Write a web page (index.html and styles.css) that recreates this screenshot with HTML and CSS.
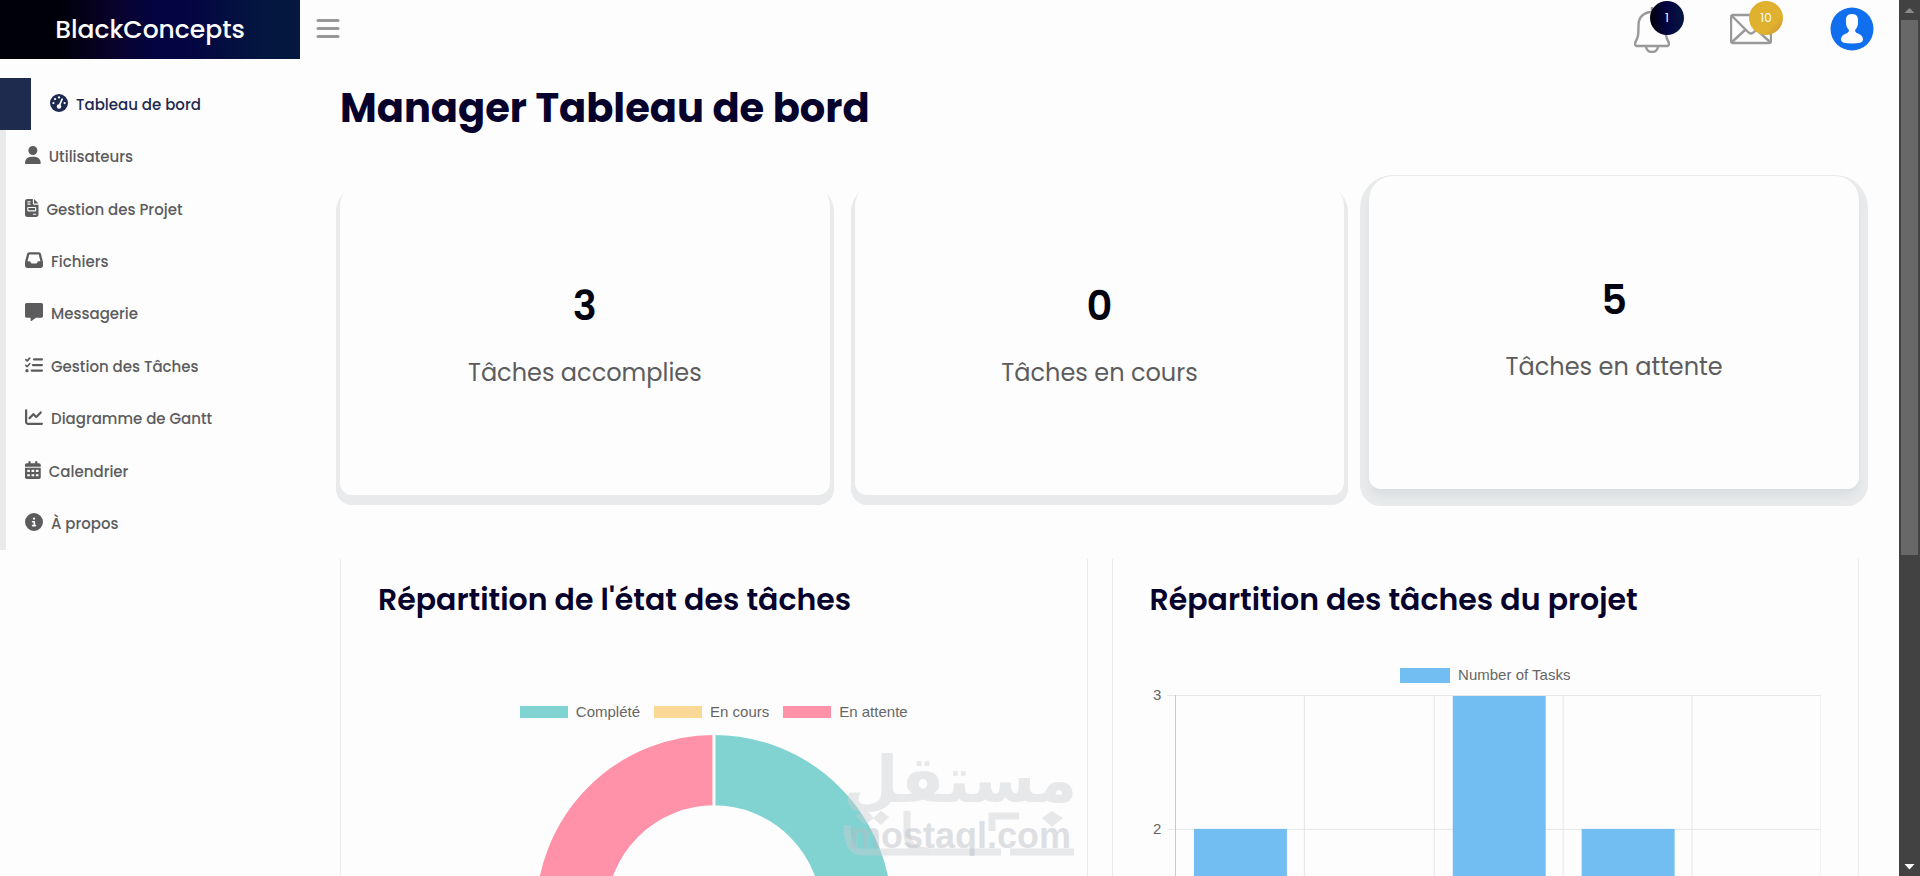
FILE: index.html
```html
<!DOCTYPE html>
<html lang="fr">
<head>
<meta charset="utf-8">
<title>BlackConcepts</title>
<link rel="stylesheet" href="styles.css">
</head>
<body>
<div class="app">
  <aside class="sidebar">
    <a class="brand" href="#">BlackConcepts</a>
    <nav class="nav">
      <a class="nav-item active" href="#"><svg class="icon" viewBox="0 0 512 512"><circle cx="256" cy="256" r="256"/><g fill="#fdfdfd"><circle cx="256" cy="96" r="32"/><circle cx="144" cy="144" r="32"/><circle cx="96" cy="256" r="32"/><circle cx="416" cy="256" r="32"/><circle cx="256" cy="352" r="64"/></g><path d="M256 352L345 148" fill="none" stroke="#fdfdfd" stroke-width="48" stroke-linecap="round"/></svg><span>Tableau de bord</span></a>
      <a class="nav-item" href="#"><svg class="icon" viewBox="0 0 448 512"><path d="M224 256A128 128 0 1 0 224 0a128 128 0 1 0 0 256zm-45.7 48C79.8 304 0 383.8 0 482.3C0 498.7 13.3 512 29.7 512H418.3c16.4 0 29.7-13.3 29.7-29.7C448 383.8 368.2 304 269.7 304H178.3z"/></svg><span>Utilisateurs</span></a>
      <a class="nav-item" href="#"><svg class="icon" viewBox="0 0 384 512"><path fill-rule="evenodd" d="M64 0C28.7 0 0 28.7 0 64V448c0 35.3 28.7 64 64 64H320c35.3 0 64-28.7 64-64V160H256c-17.7 0-32-14.3-32-32V0H64zM256 0V128H384L256 0zM80 64h64c8.8 0 16 7.2 16 16s-7.2 16-16 16H80c-8.8 0-16-7.2-16-16s7.2-16 16-16zm0 64h64c8.8 0 16 7.2 16 16s-7.2 16-16 16H80c-8.8 0-16-7.2-16-16s7.2-16 16-16zM96 224H288c17.7 0 32 14.3 32 32v64c0 17.7-14.3 32-32 32H96c-17.7 0-32-14.3-32-32V256c0-17.7 14.3-32 32-32zm0 32v64H288V256H96zM240 416h64c8.8 0 16 7.2 16 16s-7.2 16-16 16H240c-8.8 0-16-7.2-16-16s7.2-16 16-16z"/></svg><span>Gestion des Projet</span></a>
      <a class="nav-item" href="#"><svg class="icon" viewBox="0 0 512 512"><path d="M121 32C91.6 32 66 52 58.9 80.5L1.9 308.4C.6 313.5 0 318.7 0 323.9V416c0 35.3 28.7 64 64 64H448c35.3 0 64-28.7 64-64V323.9c0-5.2-.6-10.4-1.9-15.5l-57-227.9C446 52 420.4 32 391 32H121zm0 64H391l48 192H387.8c-12.1 0-23.2 6.8-28.6 17.7l-14.3 28.6c-5.4 10.8-16.5 17.7-28.6 17.7H195.8c-12.1 0-23.2-6.8-28.6-17.7l-14.3-28.6c-5.4-10.8-16.5-17.7-28.6-17.7H73L121 96z"/></svg><span>Fichiers</span></a>
      <a class="nav-item" href="#"><svg class="icon" viewBox="0 0 512 512"><path d="M48 0C20 0 0 20 0 48V368c0 28 20 48 48 48h112v80c0 6.1 3.4 11.6 8.8 14.3s11.9 2.1 16.8-1.5L309.3 416H464c28 0 48-20 48-48V48c0-28-20-48-48-48H48z"/></svg><span>Messagerie</span></a>
      <a class="nav-item" href="#"><svg class="icon" viewBox="0 0 512 512"><g fill="none" stroke="currentColor" stroke-width="56" stroke-linecap="round" stroke-linejoin="round"><path d="M256 96H480M224 256H480M192 416H480" stroke-width="64"/><path d="M24 104l40 36 70-80M24 264l40 36 70-80" stroke-width="48"/></g><circle cx="56" cy="416" r="48"/></svg><span>Gestion des Tâches</span></a>
      <a class="nav-item" href="#"><svg class="icon" viewBox="0 0 512 512"><path d="M64 64c0-17.7-14.3-32-32-32S0 46.3 0 64V400c0 44.2 35.8 80 80 80H480c17.7 0 32-14.3 32-32s-14.3-32-32-32H80c-8.8 0-16-7.2-16-16V64zm406.6 86.6c12.5-12.5 12.5-32.8 0-45.3s-32.8-12.5-45.3 0L320 210.7l-57.4-57.4c-12.5-12.5-32.8-12.5-45.3 0l-112 112c-12.5 12.5-12.5 32.8 0 45.3s32.8 12.5 45.3 0L240 221.3l57.4 57.4c12.5 12.5 32.8 12.5 45.3 0l128-128z"/></svg><span>Diagramme de Gantt</span></a>
      <a class="nav-item" href="#"><svg class="icon" viewBox="0 0 448 512"><path fill-rule="evenodd" d="M96 32a32 32 0 0 1 64 0V64H288V32a32 32 0 0 1 64 0V64h48c26.500 0 48 21.500 48 48v48H0V112C0 85.500 21.500 64 48 64H96zM0 192H448V464c0 26.500-21.500 48-48 48H48c-26.500 0-48-21.500-48-48zM64 250v60h74v-60zM186 250v60h76v-60zM310 250v60h74v-60zM64 376v60h74v-60zM186 376v60h76v-60zM310 376v60h74v-60z"/></svg><span>Calendrier</span></a>
      <a class="nav-item" href="#"><svg class="icon" viewBox="0 0 512 512"><path d="M256 512A256 256 0 1 0 256 0a256 256 0 1 0 0 512zM216 336h24V272H216c-13.3 0-24-10.7-24-24s10.7-24 24-24h48c13.3 0 24 10.7 24 24v88h8c13.3 0 24 10.7 24 24s-10.7 24-24 24H216c-13.3 0-24-10.7-24-24s10.7-24 24-24zm40-208a32 32 0 1 1 0 64 32 32 0 1 1 0-64z"/></svg><span>À propos</span></a>
    </nav>
  </aside>

  <div class="page">
    <header class="topbar">
      <button class="plain menu" aria-label="Menu"><svg width="24" height="22" viewBox="0 0 24 22"><path d="M2 2.500H22M2 10.500H22M2 18.500H22" stroke="#999" stroke-width="3" stroke-linecap="round"/></svg></button>
      <div class="actions">
        <button class="plain action bell" aria-label="Notifications"><svg width="36" height="48" viewBox="0 0 36 48" fill="none" stroke="#999" stroke-width="2.400"><path d="M18 7C9 7 4.500 13 4.500 20C4.500 30 4 33 1.500 37C.5 39.500 1 41 3 41H33C35 41 35.500 39.500 34.500 37C32 33 31.500 30 31.500 20C31.500 13 27 7 18 7zM18 7V2M12 41C12 49 24 49 24 41"/></svg><span class="badge badge-dark">1</span></button>
        <button class="plain action" aria-label="Messages"><svg width="42" height="32" viewBox="0 0 42 32" fill="none" stroke="#999" stroke-width="2.400"><rect x="1" y="2" width="40" height="28" rx="2"/><path d="M2 3L18 19Q21 22 24 19L40 3M2 29L15 17M40 29L27 17"/></svg><span class="badge badge-gold">10</span></button>
        <button class="plain action" aria-label="Profil"><svg width="44" height="44" viewBox="0 0 44 44"><circle cx="22" cy="22" r="21.500" fill="#0f6fee"/><path d="M22 7C17 7 15.500 10 16 15C16 19 17 21 19 23C19 25.500 17 26 14 27.500C11.500 29 11 31 11 33Q11 36.500 22 36.500T33 33C33 31 32.500 29 30 27.500C27 26 25 25.500 25 23C27 21 28 19 28 15C28.500 10 27 7 22 7z" fill="#fdfdfd"/></svg></button>
      </div>
    </header>

    <main class="content">
      <h1>Manager Tableau de bord</h1>
      <section class="stats">
        <article class="stat"><strong>3</strong><span>Tâches accomplies</span></article>
        <article class="stat"><strong>0</strong><span>Tâches en cours</span></article>
        <article class="stat raised"><strong>5</strong><span>Tâches en attente</span></article>
      </section>
      <section class="panels">
        <article class="panel">
          <h2>Répartition de l'état des tâches</h2>
          <div class="chart chart-donut">
            <ul class="legend">
              <li><i class="swatch teal"></i>Complété</li>
              <li><i class="swatch amber"></i>En cours</li>
              <li><i class="swatch pink"></i>En attente</li>
            </ul>
            <svg class="donut" viewBox="0 0 354 354" role="img" aria-label="État des tâches"><g fill="none" stroke-width="70"><path d="M177 35A142 142 0 0 1 177 319" stroke="#81d3d2"/><path d="M177 319A142 142 0 0 1 177 35" stroke="#ff91a9"/></g><path d="M177 0V354" stroke="#fdfdfd" stroke-width="3"/></svg>
          </div>
          <svg class="watermark" viewBox="0 0 230 108" aria-hidden="true">
            <g class="mark">
              <text class="mark-ar" x="115" y="51" text-anchor="middle" direction="rtl">مستقل</text>
              <path d="M2 74Q2 101 16 101H156M165 101H229M62 60V82Q62 100 84 100M147 80V65H174" fill="none" stroke="#cbcdd0" stroke-width="7"/>
              <path d="M20 58l9 9-9 7-9-9zM36 60l8 6-8 8-8-7zM207 60l11 7-11 9-10-9z"/>
            </g>
            <text class="mark-latin" x="115" y="97" text-anchor="middle">mostaql.com</text>
          </svg>
        </article>
        <article class="panel">
          <h2>Répartition des tâches du projet</h2>
          <div class="chart chart-bars">
            <ul class="legend">
              <li><i class="swatch wide"></i>Number of Tasks</li>
            </ul>
            <svg class="bars" viewBox="0 0 672 412" role="img" aria-label="Tâches du projet">
              <g stroke="#e6e6e6"><path d="M17 8.500H672M17 142.500H672M17 275.500H672M154.500 8V409M284.500 8V409M413.500 8V409M542.500 8V409M671.500 8V409"/><path d="M25.500 8V409M17 409.500H672" stroke="#c8c8c8"/></g>
              <g fill="#72bdf2"><rect x="44" y="142" width="93" height="267"/><rect x="303" y="9" width="93" height="400"/><rect x="432" y="142" width="93" height="267"/></g>
              <g class="axis"><text x="3" y="13">3</text><text x="3" y="147">2</text></g>
            </svg>
          </div>
        </article>
      </section>
    </main>
  </div>

  <div class="scrollbar" aria-hidden="true">
    <svg width="21" height="20" viewBox="0 0 21 20"><path d="M5.500 13L10.500 8L15.500 13z" fill="#8b8b8b"/></svg>
    <div class="track"><div class="thumb"></div></div>
    <svg width="21" height="20" viewBox="0 0 21 20"><path d="M5.500 8L10.500 13.500L15.500 8z" fill="#fdfdfd"/></svg>
  </div>
</div>
</body>
</html>
```
FILE: styles.css
```css
* { box-sizing: border-box; }
body {
  margin: 0;
  background: #fdfdfd;
  color: #5c5c5e;
  font-family: Poppins, Inter, "Open Sans", sans-serif;
  overflow: hidden;
}
h1, h2, ul { margin: 0; padding: 0; }
a { color: inherit; text-decoration: none; }
.app { display: flex; height: 100vh; overflow: hidden; }

.sidebar { flex: 0 0 300px; }
.brand {
  display: flex;
  align-items: center;
  justify-content: center;
  height: 59px;
  color: #fdfdfd;
  font-size: 25px;
  font-weight: 500;
  background: linear-gradient(90deg, #00000a 20%, #09022b 38%, #040442 52%, #040442 62%, #04173f 88%);
}
.nav {
  display: flex;
  flex-direction: column;
  min-height: 472px;
  margin-top: 19px;
}
.nav-item {
  flex: 1;
  display: flex;
  align-items: center;
  gap: 8px;
  padding-left: 19px;
  border-left: 6px solid #e8eaeb;
  font-size: 15px;
  font-weight: 500;
}
.nav-item.active { border-left: 31px solid #1f2a4f; color: #1d2951; }
.icon { height: 18px; margin-bottom: 3px; fill: currentColor; }

.page { flex: 1; min-width: 0; }
.topbar {
  display: flex;
  align-items: center;
  justify-content: space-between;
  height: 58px;
  padding: 0 25px 0 16px;
}
.plain { padding: 0; border: 0; background: none; font: inherit; }
.plain svg { display: block; }
.actions { display: flex; align-items: center; gap: 58px; }
.action { position: relative; }
.bell { margin-right: 2px; }
.badge {
  position: absolute;
  right: -14px;
  top: -4px;
  width: 34px;
  height: 34px;
  border-radius: 50%;
  color: #fdfdfd;
  font-size: 12px;
  line-height: 34px;
  text-align: center;
}
.badge-dark { background: linear-gradient(90deg, #00000a, #040442 50%, #04173f); }
.badge-gold { top: -12px; right: -11px; background: linear-gradient(135deg, #e0b02f 70%, #c98f3a); }

.content { padding: 20px 40px 0; }
h1 { color: #06022c; font-size: 40px; line-height: 60px; font-weight: 700; }
.stats {
  display: grid;
  grid-template-columns: repeat(3, 1fr);
  gap: 25px;
  margin-top: 44px;
}
.stat {
  display: flex;
  flex-direction: column;
  align-items: center;
  padding: 94px 16px 104px;
  border-radius: 24px 24px 12px 12px;
  background: #fdfdfd;
  box-shadow: 0 6px 0 4px #e8eaeb;
}
.stat strong { color: #03020f; font-size: 40px; line-height: 60px; font-weight: 600; }
.stat span { margin-top: 18px; font-size: 24px; line-height: 37px; font-weight: 400; }
.stat.raised {
  transform: translateY(-6px);
  box-shadow: 0 8px 8px -2px #d9dde0, 0 8px 0 9px #e8eaeb;
}

.panels {
  display: grid;
  grid-template-columns: repeat(2, 1fr);
  gap: 24px;
  margin-top: 64px;
}
.panel {
  position: relative;
  padding: 19px 37px 40px;
  border: solid #e8eaeb;
  border-width: 0 1px;
}
h2 { color: #06022c; font-size: 30px; line-height: 44px; font-weight: 600; }
.chart { font-family: "Liberation Sans", Arial, sans-serif; font-size: 15px; line-height: 18px; color: #666; }
.chart-donut { padding-top: 81px; }
.chart-bars { padding-top: 44px; }
.legend { display: flex; justify-content: center; gap: 14px; list-style: none; }
.legend li { display: flex; align-items: center; gap: 8px; }
.swatch { width: 48px; height: 12px; }
.swatch.wide { width: 50px; height: 15px; background: #72bdf2; }
.teal { background: #81d3d2; }
.amber { background: #fcd897; }
.pink { background: #ff91a9; }
.donut { display: block; width: 53%; margin: 14px auto 0; }
.bars { display: block; width: 100%; margin-top: 3px; }
.axis { fill: #666; font-size: 15px; }
.watermark { position: absolute; right: 12px; top: 192px; width: 230px; height: 108px; overflow: visible; }
.mark { opacity: .42; fill: #cbcdd0; }
.mark-ar { font-family: "DejaVu Sans", sans-serif; font-size: 64px; font-weight: 700; }
.mark-latin { fill: #b9bcc2; opacity: .45; font-family: "Liberation Sans", Arial, sans-serif; font-size: 36px; font-weight: 700; }

.scrollbar { flex: 0 0 21px; display: flex; flex-direction: column; background: #424242; }
.track { flex: 1; padding: 0 2px; }
.thumb { height: 64%; background: #686868; }
```
